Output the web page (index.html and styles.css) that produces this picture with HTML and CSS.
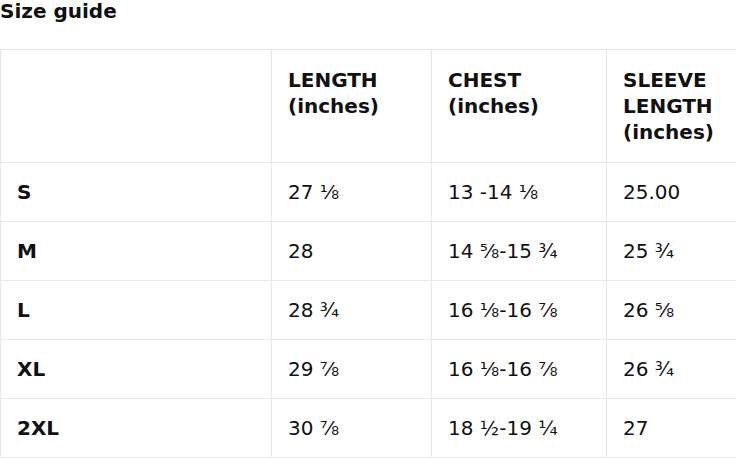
FILE: index.html
```html
<!DOCTYPE html>
<html lang="en">
<head>
<meta charset="utf-8">
<title>Size guide</title>
<link rel="stylesheet" href="styles.css">
</head>
<body>
<h2 class="title">Size guide</h2>
<table class="size-table">
  <colgroup>
    <col class="c1"><col class="c2"><col class="c3"><col class="c4">
  </colgroup>
  <thead>
    <tr>
      <th></th>
      <th>LENGTH<br>(inches)</th>
      <th>CHEST<br>(inches)</th>
      <th>SLEEVE<br>LENGTH<br>(inches)</th>
    </tr>
  </thead>
  <tbody>
    <tr><th>S</th><td>27 ⅛</td><td>13 -14 ⅛</td><td>25.00</td></tr>
    <tr><th>M</th><td>28</td><td>14 ⅝-15 ¾</td><td>25 ¾</td></tr>
    <tr><th>L</th><td>28 ¾</td><td>16 ⅛-16 ⅞</td><td>26 ⅝</td></tr>
    <tr><th>XL</th><td>29 ⅞</td><td>16 ⅛-16 ⅞</td><td>26 ¾</td></tr>
    <tr><th>2XL</th><td>30 ⅞</td><td>18 ½-19 ¼</td><td>27</td></tr>
  </tbody>
</table>
</body>
</html>
```
FILE: styles.css
```css
html, body {
  margin: 0;
  padding: 0;
  background: #ffffff;
  color: #111111;
  font-family: "DejaVu Sans", sans-serif;
}
.title {
  margin: 0;
  font-size: 20px;
  line-height: 22px;
  font-weight: bold;
  color: #111;
}
.size-table {
  margin-top: 27px;
  border-collapse: collapse;
  width: 737px;
  table-layout: fixed;
  border-left: 1px solid #e8e8e8;
}
.c1 { width: 271px; }
.c2 { width: 160px; }
.c3 { width: 175px; }
.c4 { width: 131px; }
.size-table th,
.size-table td {
  border-top: 1px solid #e8e8e8;
  border-bottom: 1px solid #e8e8e8;
  border-right: 1px solid #e8e8e8;
  text-align: left;
  vertical-align: top;
  font-size: 20px;
  line-height: 26px;
  padding: 16px 16px;
}
.size-table thead th {
  font-weight: bold;
  padding: 17px 16px;
}
.size-table tbody th {
  font-weight: bold;
}
.size-table td {
  font-weight: normal;
}
```
